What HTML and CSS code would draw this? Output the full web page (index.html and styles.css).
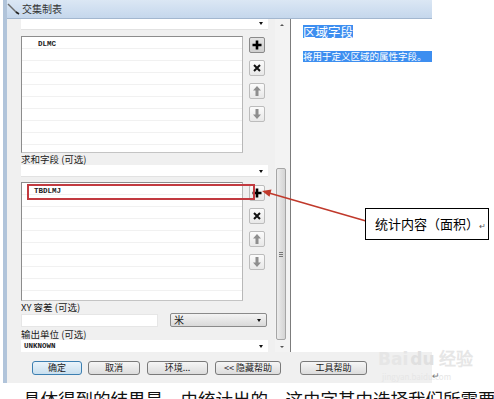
FILE: index.html
```html
<!DOCTYPE html>
<html lang="zh-CN">
<head>
    <meta charset="UTF-8">
    <title>交集制表</title>
    <link rel="stylesheet" href="styles.css">
</head>
<body>
    <div class="window">
        <div class="titlebar">
            <svg class="title-icon" width="14" height="12" viewBox="0 0 14 12"><path d="M1 1l9 9" stroke="#6b6b6b" stroke-width="1.4"/><path d="M9 9l3 2" stroke="#222" stroke-width="1.6"/></svg>
            <span class="title">交集制表</span>
        </div>

        <div class="body">
            <div class="pane">
                <div class="form">
                    <div class="combo combo-top"></div>

                    <div class="list-row first">
                        <div class="listbox"><div class="item">DLMC</div></div>
                        <div class="tools">
                            <div class="tool active"><svg width="14" height="14" viewBox="0 0 14 14"><path d="M7 2.5v9M2.5 7h9" stroke="#000" stroke-width="2.6"/></svg></div>
                            <div class="tool"><svg width="14" height="14" viewBox="0 0 14 14"><path d="M4 4l6 6M10 4l-6 6" stroke="#111" stroke-width="2"/></svg></div>
                            <div class="tool"><svg width="14" height="14" viewBox="0 0 14 14"><path d="M7 2l-4 4.5h2.5V12h3V6.5H11z" fill="#8e8e8e"/></svg></div>
                            <div class="tool"><svg width="14" height="14" viewBox="0 0 14 14"><path d="M7 12l-4-4.5h2.5V2h3v5.5H11z" fill="#8e8e8e"/></svg></div>
                        </div>
                    </div>

                    <div class="label">求和字段 (可选)</div>
                    <div class="combo"></div>

                    <div class="list-row second">
                        <div class="listbox tall"><div class="item">TBDLMJ</div></div>
                        <div class="tools">
                            <div class="tool"><svg width="14" height="14" viewBox="0 0 14 14"><path d="M7 2.5v9M2.5 7h9" stroke="#000" stroke-width="2.6"/></svg></div>
                            <div class="tool"><svg width="14" height="14" viewBox="0 0 14 14"><path d="M4 4l6 6M10 4l-6 6" stroke="#111" stroke-width="2"/></svg></div>
                            <div class="tool"><svg width="14" height="14" viewBox="0 0 14 14"><path d="M7 2l-4 4.5h2.5V12h3V6.5H11z" fill="#8e8e8e"/></svg></div>
                            <div class="tool"><svg width="14" height="14" viewBox="0 0 14 14"><path d="M7 12l-4-4.5h2.5V2h3v5.5H11z" fill="#8e8e8e"/></svg></div>
                        </div>
                    </div>

                    <div class="label">XY 容差 (可选)</div>
                    <div class="xy-row">
                        <div class="input"></div>
                        <div class="select">米</div>
                    </div>

                    <div class="label">输出单位 (可选)</div>
                    <div class="combo combo-last"><div class="item">UNKNOWN</div></div>
                </div>

                <div class="vscroll">
                    <div class="scroll-btn up"></div>
                    <div class="track">
                        <div class="thumb"><span class="grip"></span></div>
                    </div>
                    <div class="scroll-btn down"></div>
                </div>
            </div>

            <div class="help">
                <div class="help-title">区域字段</div>
                <div class="help-text">将用于定义区域的属性字段。</div>
            </div>
        </div>

        <div class="footer">
            <div class="btn default w50">确定</div>
            <div class="btn w52">取消</div>
            <div class="btn w61">环境...</div>
            <div class="btn w66">&lt;&lt; 隐藏帮助</div>
            <div class="btn w67 far">工具帮助</div>
        </div>
    </div>

    <div class="caption">具体得到的结果是，由统计出的，这由字其中选择我们所需要的各类地（面积）</div>

    <!-- annotations drawn over the screenshot -->
    <div class="mark-box"></div>
    <svg class="mark-arrow" width="494" height="399" viewBox="0 0 494 399">
        <path d="M366 221L269 193" stroke="#c0392b" stroke-width="1.6"/>
        <polygon points="262,191 271.5,189.5 269.5,196.8" fill="#c0392b"/>
    </svg>
    <div class="callout">统计内容（面积）<span class="ret">↵</span></div>

    <div class="watermark">
        <span class="wm-logo">Bai<span class="wm-du">du</span>经验</span>
        <span class="wm-url">jingyan.baidu.com</span>
    </div>
    <span class="ret-mark">↵</span>
</body>
</html>
```

FILE: styles.css
```css
body {
    margin: 0;
    width: 494px;
    height: 399px;
    overflow: hidden;
    background: #fff;
    position: relative;
    font-family: "Noto Sans CJK SC", "Noto Sans", sans-serif;
    font-size: 10px;
    line-height: 12px;
    color: #1a1a1a;
}

.window {
    margin-left: 3px;
    width: 425px;
    border-left: 4px solid #b1c4da;
    background: #f0f0f0;
}

.titlebar {
    height: 18px;
    border-bottom: 1px solid #a3b7cf;
    background: linear-gradient(#dbe7f4, #c5d7ec);
    display: flex;
    align-items: flex-start;
}

.title-icon {
    margin-top: 3px;
}

.title {
    margin-left: 1px;
    margin-top: 3px;
    font-size: 10px;
    line-height: 12px;
    color: #333;
}

.body {
    display: flex;
    height: 333px;
}

.pane {
    width: 283px;
    border-right: 1px solid #7c7c7c;
    display: flex;
}

.form {
    width: 254px;
    padding-left: 14px;
    display: flex;
    flex-direction: column;
}

.combo {
    width: 247px;
    height: 12px;
    flex-shrink: 0;
    background: #fff;
    border-bottom: 1px solid #e2e2e2;
    position: relative;
    box-sizing: border-box;
}

.combo::after {
    content: "";
    position: absolute;
    right: 5px;
    top: 5px;
    border-left: 2.5px solid transparent;
    border-right: 2.5px solid transparent;
    border-top: 3px solid #111;
}

.combo-top {
    height: 11px;
}

.combo-top::after {
    top: 3px;
}

.combo-last {
    border-bottom: none;
}

.combo-last .item {
    padding: 1px 0 0 3px;
    line-height: 10px;
}

.list-row {
    display: flex;
    gap: 6px;
    flex-shrink: 0;
}

.list-row.first {
    margin-top: 6px;
}

.list-row.second {
    margin-top: 5px;
}

.listbox {
    width: 222px;
    height: 117px;
    box-sizing: border-box;
    border: 1px solid #8c8c8c;
    border-right-color: #b8b8b8;
    border-bottom-color: #c4c4c4;
    background: #fff repeating-linear-gradient(#fff 0, #fff 11px, #f1f1f1 11px, #f1f1f1 12px);
}

.listbox.tall {
    height: 119px;
}

.item {
    font-family: "Liberation Mono", monospace;
    font-weight: bold;
    font-size: 7.5px;
    line-height: 11px;
    padding: 2px 0 0 16px;
    color: #222;
}

.listbox.tall .item {
    padding-left: 12px;
    padding-top: 3px;
}

.tools {
    display: flex;
    flex-direction: column;
    gap: 7px;
    padding-top: 1px;
}

.list-row.second .tools {
    padding-top: 3px;
}

.tool {
    width: 16px;
    height: 16px;
    box-sizing: border-box;
    border: 1px solid #bcbcbc;
    border-radius: 2px;
    background: linear-gradient(#fbfbfb, #e8e8e8);
    display: flex;
    align-items: center;
    justify-content: center;
}

.tool.active {
    border-color: #8a8a8a;
    background: linear-gradient(#e4e4e4, #cfcfcf);
}

.label {
    font-size: 9.5px;
    line-height: 12px;
    height: 12px;
    flex-shrink: 0;
    white-space: nowrap;
}

.xy-row {
    display: flex;
    align-items: flex-start;
    height: 15px;
    flex-shrink: 0;
}

.input {
    width: 137px;
    height: 13px;
    margin-top: 1px;
    background: #fff;
    border: 1px solid #e6e6e6;
    box-sizing: border-box;
}

.select {
    margin-left: 12px;
    width: 97px;
    height: 14px;
    box-sizing: border-box;
    border: 1px solid #8a8a8a;
    border-radius: 2px;
    background: linear-gradient(#f4f4f4, #d9d9d9);
    font-size: 10px;
    line-height: 12px;
    padding-left: 3px;
    position: relative;
}

.select::after {
    content: "";
    position: absolute;
    right: 5px;
    top: 5px;
    border-left: 2.5px solid transparent;
    border-right: 2.5px solid transparent;
    border-top: 3px solid #111;
}

.vscroll {
    width: 15px;
    display: flex;
    flex-direction: column;
    background: #f3f3f3;
}

.scroll-btn {
    height: 14px;
    position: relative;
}

.scroll-btn::after {
    content: "";
    position: absolute;
    left: 5px;
    border-left: 2px solid transparent;
    border-right: 2px solid transparent;
}

.scroll-btn.up::after {
    top: 5px;
    border-bottom: 2.5px solid #555;
}

.scroll-btn.down {
    height: 12px;
}

.scroll-btn.down::after {
    top: 6px;
    border-top: 2.5px solid #555;
}

.track {
    flex: 1;
    padding-left: 1px;
}

.thumb {
    margin-top: 135px;
    width: 10px;
    height: 172px;
    box-sizing: border-box;
    border: 1px solid #a6a6a6;
    border-radius: 2px;
    background: linear-gradient(to right, #ececec, #d4d4d4);
    display: flex;
    align-items: center;
    justify-content: center;
}

.grip {
    width: 4px;
    height: 5px;
    background: repeating-linear-gradient(#777 0, #777 1px, transparent 1px, transparent 2px);
}

.help {
    flex: 1;
    min-width: 0;
    background: #fff;
    padding: 6px 0 0 12px;
    font-size: 12px;
    line-height: 13px;
}

.help-title {
    display: inline-block;
    vertical-align: top;
    font-size: 12.5px;
    line-height: 13px;
    color: #fff;
    background: #3d8ef0;
}

.help-text {
    margin-top: 13px;
    font-size: 9.5px;
    line-height: 11px;
    color: #fff;
    background: #3d8ef0;
    white-space: nowrap;
    overflow: hidden;
}

.footer {
    height: 31px;
    box-sizing: border-box;
    padding: 9px 0 0 25px;
    display: flex;
    gap: 6px;
}

.btn {
    height: 14px;
    box-sizing: border-box;
    border: 1px solid #7a7a7a;
    border-radius: 3px;
    background: linear-gradient(#f6f6f6, #dcdcdc);
    font-size: 9px;
    line-height: 12px;
    text-align: center;
    color: #1a1a1a;
}

.btn.default {
    border-color: #3c7fb1;
    background: linear-gradient(#eaf4fb, #c9dfee);
}

.w50 { width: 50px; }
.w52 { width: 52px; }
.w61 { width: 61px; margin-left: 1px; }
.w66 { width: 66px; margin-left: 1px; }
.w67 { width: 67px; }
.btn.far { margin-left: 13px; }

.caption {
    padding: 6px 0 0 23px;
    font-size: 17.5px;
    line-height: 20px;
    white-space: nowrap;
    color: #111;
}

.mark-box {
    position: absolute;
    left: 27px;
    top: 184px;
    width: 228px;
    height: 16px;
    box-sizing: border-box;
    border: 2px solid #c23a40;
}

.mark-arrow {
    position: absolute;
    left: 0;
    top: 0;
    pointer-events: none;
}

.callout {
    position: absolute;
    left: 365px;
    top: 208px;
    width: 124px;
    height: 32px;
    box-sizing: border-box;
    border: 1px solid #000;
    background: #fff;
    font-size: 13px;
    line-height: 30px;
    padding-left: 9px;
    white-space: nowrap;
    color: #000;
}

.callout .ret {
    font-size: 8px;
    color: #555;
}

.watermark {
    position: absolute;
    left: 378px;
    top: 348px;
    display: flex;
    flex-direction: column;
    color: #e6e6e6;
}

.wm-logo {
    font-family: "DejaVu Sans", sans-serif;
    font-size: 17px;
    line-height: 22px;
    font-weight: bold;
}

.wm-du {
    margin: 0 4px 0 2px;
    color: #e0e0e0;
}

.wm-url {
    margin-top: 2px;
    font-size: 8px;
    line-height: 9px;
    padding-left: 4px;
}

.ret-mark {
    position: absolute;
    left: 432px;
    top: 371px;
    font-size: 9px;
    line-height: 9px;
    color: #777;
}
```
